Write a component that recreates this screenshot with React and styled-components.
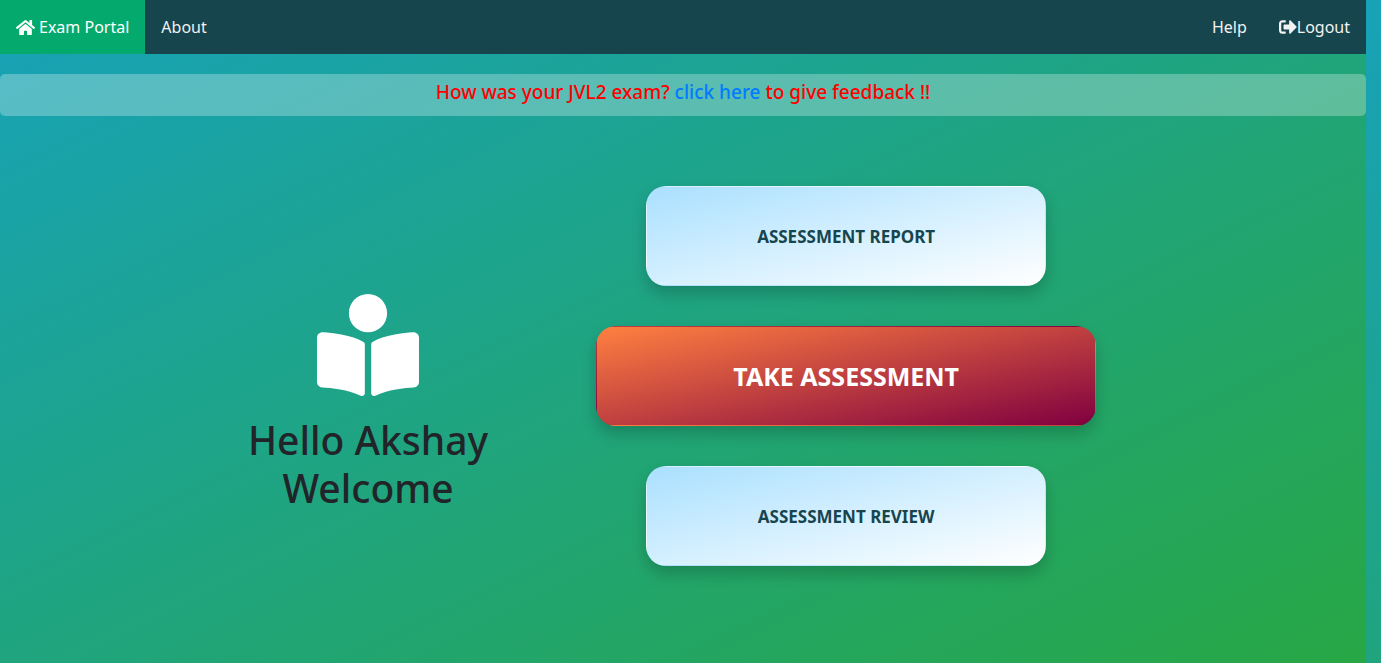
import React from "react";
import styled, { createGlobalStyle } from "styled-components";
import { FaHome, FaSignOutAlt, FaBookReader } from "react-icons/fa";

const GlobalStyle = createGlobalStyle`
  *, *::before, *::after { box-sizing: border-box; }
  body {
    margin: 0;
    font-family: "Segoe UI", "Noto Sans", sans-serif;
    font-size: 16px;
    line-height: 24px;
    color: #212529;
  }
`;

const Page = styled.div`
  min-height: 100vh;
  padding-right: 15px;
  background-image: linear-gradient(to bottom right, #17a2b8, #28a745);
  background-size: calc(100% - 15px) 100%;
`;

const NavBar = styled.nav`
  display: flex;
  justify-content: space-between;
  background: #17454e;
`;

const NavGroup = styled.div`
  display: flex;
`;

const NavLink = styled.a`
  display: flex;
  align-items: center;
  gap: ${({ $gap }) => $gap || 0}px;
  height: 54px;
  padding: 0 16px;
  font-size: 16px;
  color: ${({ $active }) => ($active ? "#ffffff" : "#f2f2f2")};
  background: ${({ $active }) => ($active ? "#04aa6d" : "transparent")};
  text-decoration: none;
`;

const Feedback = styled.div`
  margin-top: 20px;
  height: 42px;
  padding-top: 6px;
  border-radius: 5px;
  background: rgba(255, 255, 255, 0.28);
  text-align: center;
`;

const FeedbackText = styled.h5`
  margin: 0;
  font-size: 19px;
  font-weight: 500;
  line-height: 24px;
  color: #ff0000;
`;

const FeedbackLink = styled.a`
  color: #007bff;
  text-decoration: none;
`;

const Main = styled.main`
  display: flex;
  flex-wrap: wrap;
  justify-content: center;
  align-items: center;
  gap: 40px 108px;
  padding: 70px 22px 40px 0;
`;

const Welcome = styled.section`
  display: flex;
  flex-direction: column;
  align-items: center;
  gap: 20px;
  padding-top: 54px;
  text-align: center;
`;

const Greeting = styled.h1`
  margin: 0;
  font-size: 39px;
  font-weight: 500;
  line-height: 48px;
`;

const Actions = styled.section`
  display: flex;
  flex-direction: column;
  align-items: center;
  gap: 40px;
`;

const ActionButton = styled.button`
  width: ${({ $primary }) => ($primary ? 500 : 400)}px;
  max-width: 100%;
  height: 100px;
  border: 1px solid transparent;
  border-radius: 20px;
  background-image: ${({ $primary }) =>
    $primary
      ? "linear-gradient(to bottom right, #ff8040, #800040)"
      : "linear-gradient(to bottom right, #aae0ff, #ffffff)"};
  box-shadow: 0 8px 16px rgba(0, 0, 0, 0.2);
  color: ${({ $primary }) => ($primary ? "#ffffff" : "#17454e")};
  font-family: inherit;
  font-size: ${({ $primary }) => ($primary ? 25 : 17)}px;
  font-weight: 700;
  cursor: pointer;
`;

export default function App() {
  return (
    <>
      <GlobalStyle />
      <Page>
        <NavBar>
          <NavGroup>
            <NavLink href="#home" $active $gap={4}>
              <FaHome size={19} aria-hidden="true" />
              Exam Portal
            </NavLink>
            <NavLink href="#about">About</NavLink>
          </NavGroup>
          <NavGroup>
            <NavLink href="#help">Help</NavLink>
            <NavLink href="#logout">
              <FaSignOutAlt size={18} aria-hidden="true" />
              Logout
            </NavLink>
          </NavGroup>
        </NavBar>
        <Feedback>
          <FeedbackText>
            How was your JVL2 exam? <FeedbackLink href="#feedback">click here</FeedbackLink> to give
            feedback !!
          </FeedbackText>
        </Feedback>
        <Main>
          <Welcome>
            <FaBookReader size={102} color="#ffffff" aria-hidden="true" />
            <Greeting>
              Hello Akshay
              <br />
              Welcome
            </Greeting>
          </Welcome>
          <Actions>
            <ActionButton type="button">ASSESSMENT REPORT</ActionButton>
            <ActionButton type="button" $primary>
              TAKE ASSESSMENT
            </ActionButton>
            <ActionButton type="button">ASSESSMENT REVIEW</ActionButton>
          </Actions>
        </Main>
      </Page>
    </>
  );
}
